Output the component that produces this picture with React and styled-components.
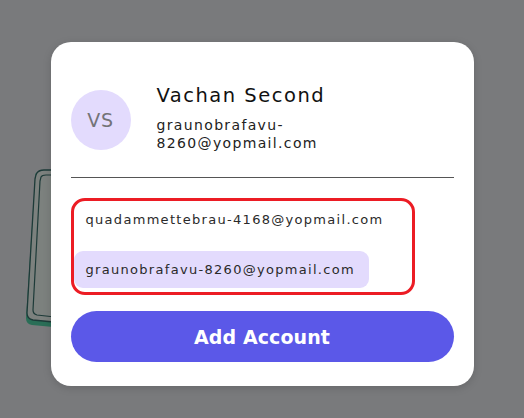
import React from "react";
import styled, { createGlobalStyle } from "styled-components";

const Global = createGlobalStyle`
  html, body { margin: 0; padding: 0; }
  body { font-family: "DejaVu Sans", "Noto Sans", sans-serif; }
`;

// затемнённый фон
const Backdrop = styled.div`
  position: relative;
  width: 524px;
  height: 418px;
  background: #797a7c;
  overflow: hidden;
  display: flex;
  justify-content: center;
  align-items: flex-start;
  padding-top: 42px;
  box-sizing: border-box;
`;

const Phone = styled.svg`
  position: absolute;
  left: 24px;
  top: 167px;
`;

const Card = styled.div`
  position: relative;
  width: 423px;
  background: #ffffff;
  border-radius: 20px;
  padding: 46px 20px 24px;
  box-sizing: border-box;
  box-shadow: 0px 2px 8px rgba(0, 0, 0, 0.15);
`;

const Header = styled.div`
  display: flex;
  align-items: center;
  gap: 26px;
`;

const Avatar = styled.div`
  width: 60px;
  height: 60px;
  flex-shrink: 0;
  border-radius: 50%;
  background: #e3dbfd;
  color: #737377;
  font-size: 19px;
  font-weight: 500;
  letter-spacing: 0.8px;
  display: flex;
  align-items: center;
  justify-content: center;
`;

const Info = styled.div`
  display: flex;
  flex-direction: column;
  margin-top: -4px;
`;

const Name = styled.div`
  font-size: 19.5px;
  font-weight: 500;
  color: #111;
  letter-spacing: 1.5px;
  line-height: 24px;
`;

const Email = styled.div`
  margin-top: 8px;
  width: 190px;
  font-size: 14px;
  color: #222;
  letter-spacing: 1.35px;
  line-height: 18px;
  word-break: break-word;
`;

const Divider = styled.hr`
  border: none;
  border-top: 1px solid #555;
  margin: 25px 0 20px;
`;

const List = styled.div`
  width: 344px;
  box-sizing: border-box;
  border: 3px solid #ec1c24;
  border-radius: 14px;
  padding: 0 0 4px 0;
  display: flex;
  flex-direction: column;
  align-items: flex-start;
  gap: 13px;
`;

const Item = styled.div`
  height: 37px;
  display: flex;
  align-items: center;
  padding: 0 14px 0 12px;
  border-radius: 9px;
  font-size: 13px;
  letter-spacing: 1.3px;
  color: #2a2a2a;
  background: ${(props) => (props.active ? "#e3dbfd" : "transparent")};
`;

const Button = styled.button`
  margin-top: 16px;
  width: 100%;
  height: 51px;
  border: none;
  border-radius: 26px;
  background: #5b58e8;
  color: #ffffff;
  font-family: inherit;
  font-size: 19px;
  font-weight: 700;
  letter-spacing: 0.1px;
  cursor: pointer;
`;

const accounts = [
  "quadammettebrau-4168@yopmail.com",
  "graunobrafavu-8260@yopmail.com",
];

export default function App() {
  return (
    <>
      <Global />
      <Backdrop>
        <Phone width="40" height="170" viewBox="0 0 40 170">
          <path
            d="M12 6 Q14 4 20 4 L40 4 L40 161 L8 158 Q2 157 2 151 L11 12 Q11 7 12 6 Z"
            fill="#2a6e57"
          />
          <path
            d="M13 6 Q15 3 20 3 L40 3 L40 156 L9 153 Q3 152 3 146 L11 12 Q12 7 13 6 Z"
            fill="#7c817e"
            stroke="#1d3a38"
            strokeWidth="1.3"
          />
          <path
            d="M17 10 Q18 8 22 8 L40 8 L40 151 L13 148 Q9 147 9 143 L16 14 Z"
            fill="none"
            stroke="#1d3a38"
            strokeWidth="1.2"
          />
        </Phone>
        <Card>
          <Header>
            <Avatar>VS</Avatar>
            <Info>
              <Name>Vachan Second</Name>
              <Email>graunobrafavu-8260@yopmail.com</Email>
            </Info>
          </Header>
          <Divider />
          <List>
            {accounts.map((a, i) => (
              <Item key={a} active={i === 1}>
                {a}
              </Item>
            ))}
          </List>
          <Button>Add Account</Button>
        </Card>
      </Backdrop>
    </>
  );
}
